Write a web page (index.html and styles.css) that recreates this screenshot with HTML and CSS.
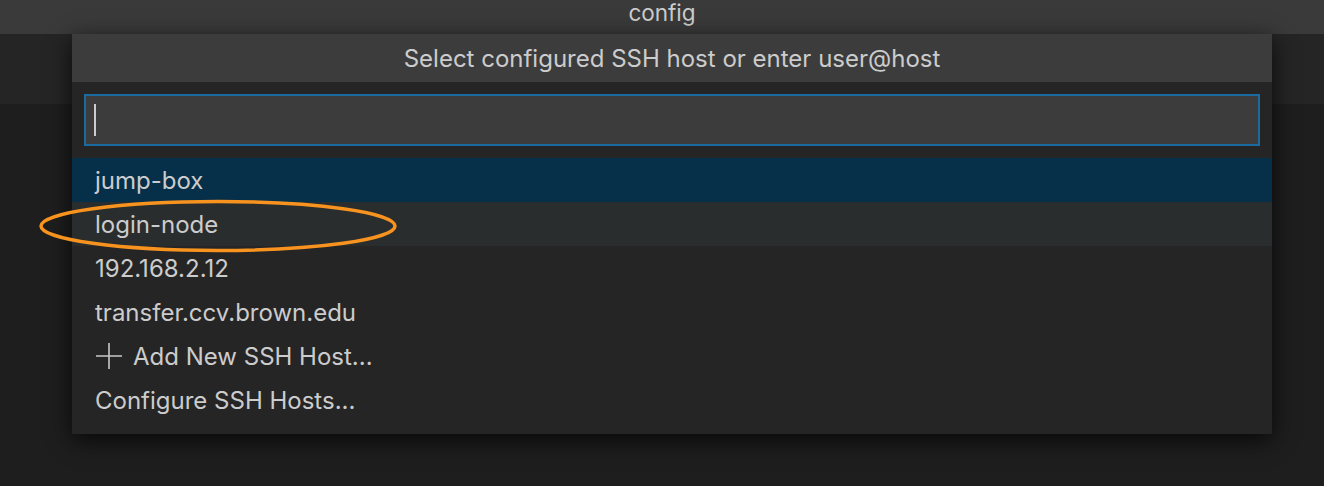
FILE: index.html
```html
<!DOCTYPE html>
<html>
<head>
<meta charset="utf-8">
<link rel="stylesheet" href="styles.css">
</head>
<body>
<div class="window">
  <div class="titlebar">config</div>
  <div class="workbench">
    <div class="tabs"></div>
    <div class="editor"></div>
  </div>
  <div class="quickpick">
    <div class="qp-title">Select configured SSH host or enter user@host</div>
    <div class="qp-input-wrap">
      <div class="qp-input"><span class="caret"></span></div>
    </div>
    <ul class="qp-list">
      <li class="item selected">jump-box</li>
      <li class="item hover">login-node</li>
      <li class="item">192.168.2.12</li>
      <li class="item">transfer.ccv.brown.edu</li>
      <li class="item"><svg class="plus" width="26" height="26" viewBox="0 0 26 26"><path d="M13 0V26M0 13H26" stroke="#c8c8c8" stroke-width="1.6" fill="none"/></svg>Add New SSH Host...</li>
      <li class="item">Configure SSH Hosts...</li>
    </ul>
  </div>
  <svg class="highlight" width="364" height="58" viewBox="0 0 364 58"><ellipse cx="182" cy="29" rx="177" ry="24.5" fill="none" stroke="#f7931e" stroke-width="3.5"/></svg>
</div>
</body>
</html>
```

FILE: styles.css
```css
html, body {
  margin: 0;
  padding: 0;
  background: #1e1e1e;
}
.window {
  position: relative;
  width: 1324px;
  height: 486px;
  overflow: hidden;
  font-family: "Inter", "Open Sans", "Liberation Sans", sans-serif;
  color: #cccccc;
}
.titlebar {
  height: 34px;
  background: #3a3a3a;
  text-align: center;
  font-size: 22.5px;
  line-height: 26px;
  color: #cccccc;
}
.workbench {
  display: flex;
  flex-direction: column;
}
.tabs {
  height: 70px;
  background: #252526;
}
.editor {
  height: 382px;
  background: #1e1e1e;
}
.quickpick {
  position: absolute;
  left: 72px;
  top: 34px;
  width: 1200px;
  height: 400px;
  background: #252526;
  box-shadow: 0 6px 22px rgba(0, 0, 0, 0.75);
  display: flex;
  flex-direction: column;
}
.qp-title {
  height: 48px;
  background: #3c3c3c;
  text-align: center;
  font-size: 24px;
  line-height: 50px;
  color: #cccccc;
}
.qp-input-wrap {
  padding: 12px 12px 12px 12px;
}
.qp-input {
  height: 48px;
  border: 2px solid #1b6aa0;
  background: #3c3c3c;
  display: flex;
  align-items: center;
  padding-left: 8px;
}
.caret {
  width: 2px;
  height: 32px;
  background: #cccccc;
}
.qp-list {
  list-style: none;
  margin: 0;
  padding: 0;
}
.item {
  height: 44px;
  display: flex;
  align-items: center;
  padding-left: 23px;
  font-size: 24px;
  color: #cccccc;
}
.item.selected {
  background: #062f4a;
}
.item.hover {
  background: #2a2d2e;
}
.plus {
  margin-left: 1px;
  margin-right: 11px;
}
.highlight {
  position: absolute;
  left: 36px;
  top: 197px;
}
```
